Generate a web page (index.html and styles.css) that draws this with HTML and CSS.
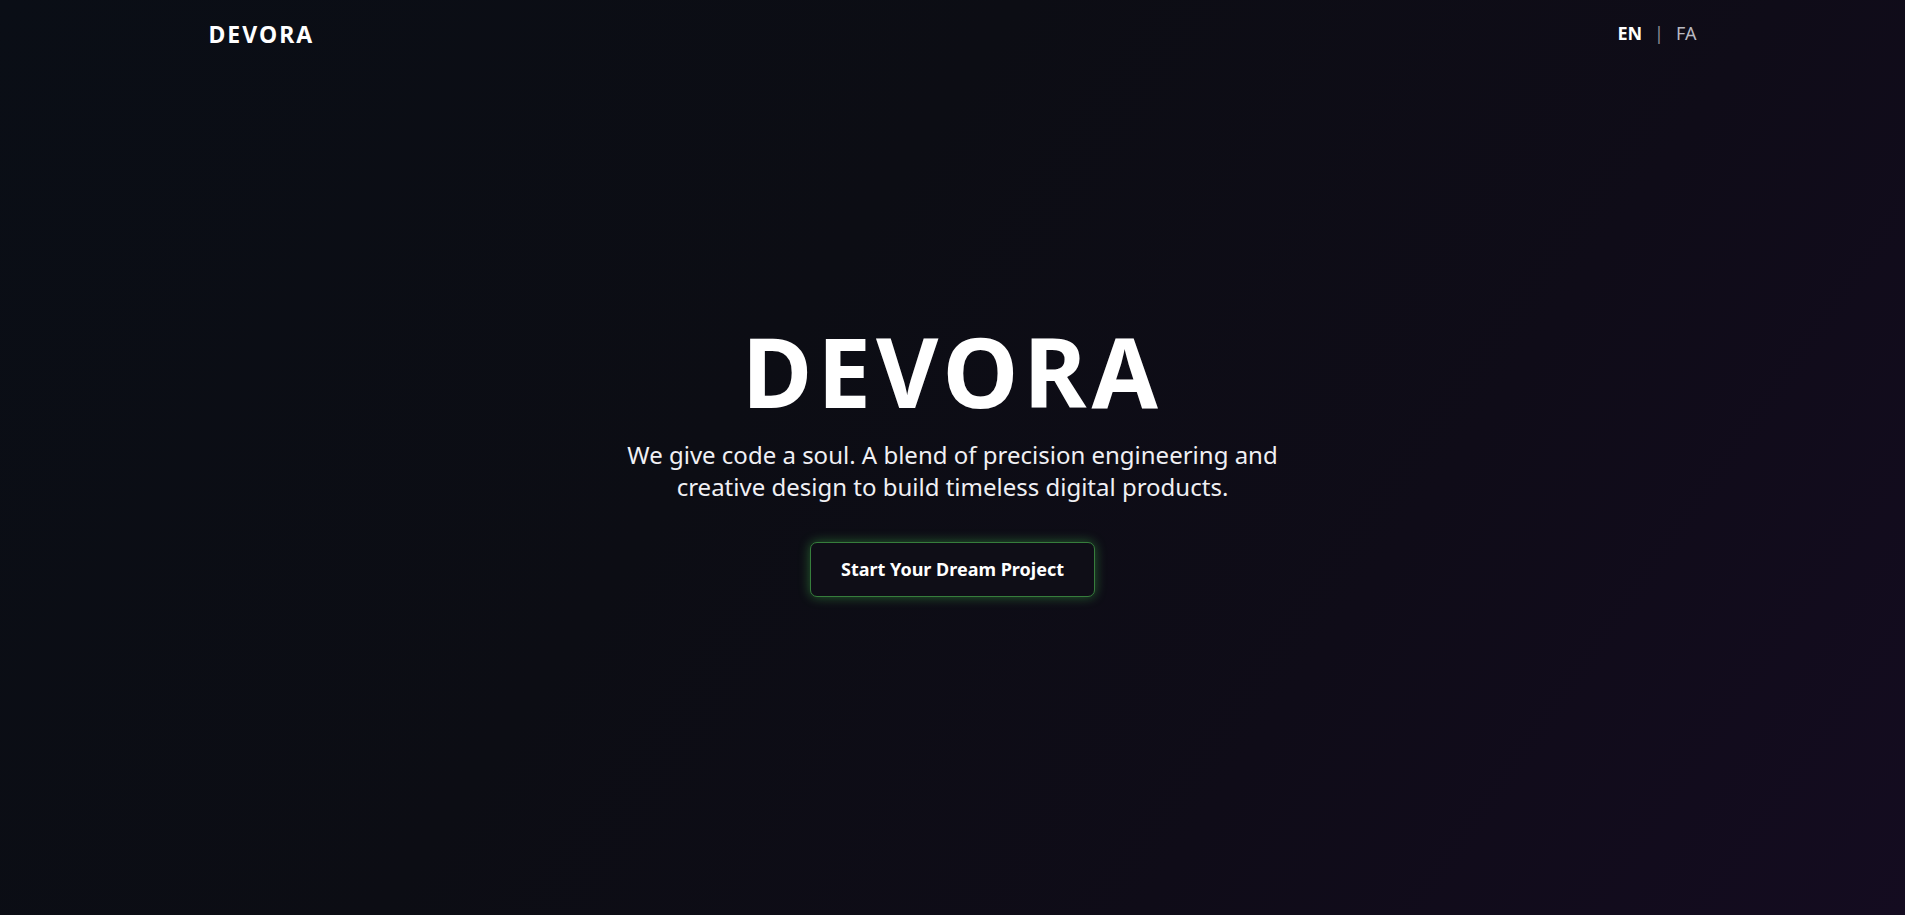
FILE: index.html
```html
<!DOCTYPE html>
<html lang="en">
<head>
<meta charset="utf-8">
<title>Devora</title>
<link rel="stylesheet" href="styles.css">
</head>
<body>
<div class="page">
  <header class="site-header">
    <div class="container header-inner">
      <a class="logo" href="#">DEVORA</a>
      <nav class="lang">
        <a class="lang-item active" href="#">EN</a>
        <span class="lang-sep">|</span>
        <a class="lang-item" href="#">FA</a>
      </nav>
    </div>
  </header>
  <main class="hero">
    <div class="hero-content">
      <h1 class="hero-title">DEVORA</h1>
      <p class="hero-text">We give code a soul. A blend of precision engineering and creative design to build timeless digital products.</p>
      <a class="cta" href="#">Start Your Dream Project</a>
    </div>
  </main>
</div>
</body>
</html>
```
FILE: styles.css
```css
* { box-sizing: border-box; margin: 0; padding: 0; }
html, body { height: 100%; }
body {
  font-family: "Noto Sans", "Open Sans", sans-serif;
  color: #fff;
  background: #0c0d14;
}
a { color: inherit; text-decoration: none; }
.page {
  position: relative;
  min-height: 100vh;
  background: linear-gradient(125deg, #0a0e16 0%, #0c0d14 40%, #0f0c18 70%, #140c20 100%);
}
.site-header {
  position: absolute;
  top: 0; left: 0; right: 0;
  z-index: 2;
}
.container {
  max-width: 1536px;
  margin: 0 auto;
  padding: 0 24px;
}
.header-inner {
  display: flex;
  align-items: center;
  justify-content: space-between;
  height: 68px;
}
.logo {
  font-size: 23px;
  font-weight: 700;
  letter-spacing: 2px;
}
.lang {
  display: flex;
  align-items: center;
  gap: 12px;
  font-size: 18px;
  margin-top: -2px;
}
.lang-item { color: #b9b9c2; }
.lang-item.active { color: #fff; font-weight: 700; }
.lang-sep { color: #8d8d96; }
.hero {
  min-height: 100vh;
  display: flex;
  align-items: center;
  justify-content: center;
  text-align: center;
}
.hero-content {
  display: flex;
  flex-direction: column;
  align-items: center;
}
.hero-title {
  font-size: 96px;
  font-weight: 700;
  letter-spacing: 5px;
  line-height: 1.1;
  margin-bottom: 7px;
}
.hero-text {
  max-width: 700px;
  font-size: 24px;
  line-height: 32px;
  color: #f0f0f4;
  margin-top: 8px;
}
.cta {
  margin-top: 39px;
  display: inline-block;
  padding: 14px 30px 15px;
  font-size: 18px;
  font-weight: 700;
  border: 1px solid #367d3c;
  border-radius: 7px;
  background: #0f0e17;
  box-shadow: 0 0 12px rgba(70, 200, 80, 0.45);
}
```
